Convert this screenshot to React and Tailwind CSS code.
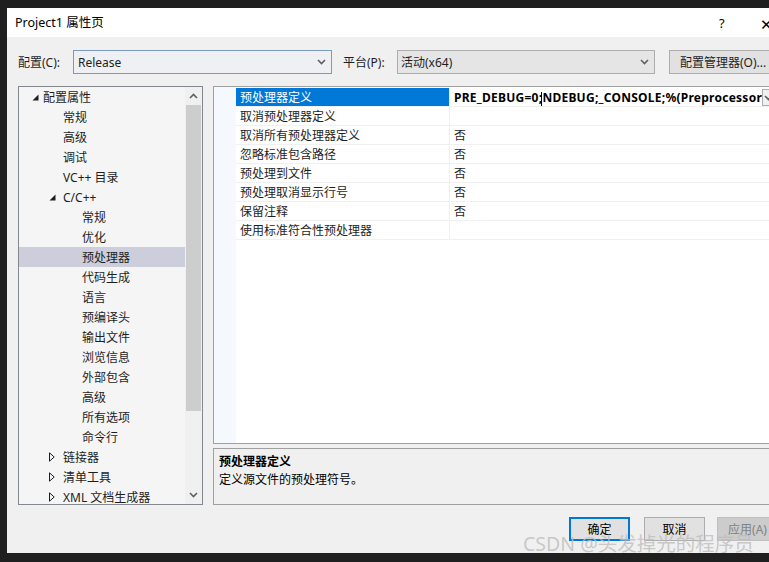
import React from "react";

const F = "font-['Noto_Sans','Noto_Sans_CJK_SC',sans-serif]";

function Chevron({ up }) {
  return (
    <svg width="9" height="6" viewBox="0 0 9 6">
      <path d={up ? "M1 5 L4.5 1.5 L8 5" : "M1 1 L4.5 4.5 L8 1"} fill="none" stroke="#606060" strokeWidth="1.6" />
    </svg>
  );
}

function Tri({ open }) {
  if (open)
    return (
      <svg width="7" height="7" viewBox="0 0 7 7">
        <path d="M6.5 0.5 L6.5 6.5 L0.5 6.5 Z" fill="#1e1e1e" />
      </svg>
    );
  return (
    <svg width="6" height="10" viewBox="0 0 6 10">
      <path d="M0.5 0.8 L5.2 5 L0.5 9.2 Z" fill="none" stroke="#1e1e1e" strokeWidth="1" />
    </svg>
  );
}

const tree = [
  { t: "配置属性", l: 0, tri: "open" },
  { t: "常规", l: 1 },
  { t: "高级", l: 1 },
  { t: "调试", l: 1 },
  { t: "VC++ 目录", l: 1 },
  { t: "C/C++", l: 1, tri: "open" },
  { t: "常规", l: 2 },
  { t: "优化", l: 2 },
  { t: "预处理器", l: 2, sel: true },
  { t: "代码生成", l: 2 },
  { t: "语言", l: 2 },
  { t: "预编译头", l: 2 },
  { t: "输出文件", l: 2 },
  { t: "浏览信息", l: 2 },
  { t: "外部包含", l: 2 },
  { t: "高级", l: 2 },
  { t: "所有选项", l: 2 },
  { t: "命令行", l: 2 },
  { t: "链接器", l: 1, tri: "closed" },
  { t: "清单工具", l: 1, tri: "closed" },
  { t: "XML 文档生成器", l: 1, tri: "closed" },
];

const props = [
  ["预处理器定义", ""],
  ["取消预处理器定义", ""],
  ["取消所有预处理器定义", "否"],
  ["忽略标准包含路径", "否"],
  ["预处理到文件", "否"],
  ["预处理取消显示行号", "否"],
  ["保留注释", "否"],
  ["使用标准符合性预处理器", ""],
];

export default function App() {
  const textX = { 0: "pl-[24px]", 1: "pl-[44px]", 2: "pl-[63px]" };
  const triX = { 0: "left-[13px]", 1: "left-[30px]", 2: "left-[48px]" };
  return (
    <div className={`${F} w-[769px] h-[562px] bg-[#1f1f1f] pt-[8px] pl-[7px] pb-[9px] flex flex-col overflow-hidden text-[12px] text-[#1e1e1e]`}>
      <div className="flex-1 flex flex-col bg-[#f0f0f0] relative w-[800px]">
        {/* title bar */}
        <div className="h-[29px] bg-white flex items-center shrink-0 pt-[2px] relative">
          <span className="pl-[8px] text-[12.5px] text-black">Project1 属性页</span>
          <span className="absolute left-[712px] top-[6px] text-[13px] text-black">?</span>
          <span className="absolute left-[753px] top-[5px] text-[15px] text-black font-light">✕</span>
        </div>
        {/* control row */}
        <div className="flex items-center h-[24px] mt-[13px] pl-[11px] shrink-0">
          <span className="w-[55px] pt-[2px]">配置(C):</span>
          <div className="w-[259px] h-[24px] border border-[#7a9ac0] bg-[#eef0f3] flex items-center justify-between pl-[4px] pr-[5px]">
            <span className="pt-[2px]">Release</span>
            <Chevron />
          </div>
          <span className="ml-[11px] w-[54px] pt-[2px]">平台(P):</span>
          <div className="w-[258px] h-[24px] border border-[#adadad] bg-[#e5e5e5] flex items-center justify-between pl-[3px] pr-[5px]">
            <span className="pt-[2px]">活动(x64)</span>
            <Chevron />
          </div>
          <div className="ml-[14px] w-[110px] h-[24px] border border-[#adadad] bg-[#e1e1e1] flex items-center pl-[10px] pt-[2px]">
            配置管理器(O)...
          </div>
        </div>
        {/* main area */}
        <div className="flex mt-[12px] pl-[11px] h-[419px] shrink-0">
          {/* tree */}
          <div className="w-[185px] h-full border border-[#828790] bg-[#f5f5f5] flex">
            <div className="w-[166px] flex flex-col">
              {tree.map((r, i) => (
                <div
                  key={i}
                  className={`relative h-[20px] flex items-center pt-[2px] ${textX[r.l]} ${r.sel ? "bg-[#cccedb]" : ""}`}
                >
                  {r.tri && (
                    <span className={`absolute ${triX[r.l]} top-0 h-[20px] flex items-center`}>
                      <Tri open={r.tri === "open"} />
                    </span>
                  )}
                  <span className="whitespace-nowrap">{r.t}</span>
                </div>
              ))}
            </div>
            <div className="w-[17px] bg-[#f0f0f0] flex flex-col items-center">
              <div className="h-[18px] flex items-center justify-center">
                <Chevron up />
              </div>
              <div className="w-[15px] h-[306px] bg-[#cdcdcd]" />
              <div className="flex-1" />
              <div className="h-[18px] flex items-center justify-center">
                <Chevron />
              </div>
            </div>
          </div>
          {/* right */}
          <div className="ml-[10px] flex-1 flex flex-col">
            <div className="h-[358px] border border-[#a0a0a0] bg-white flex">
              <div className="w-[22px] bg-[#f5f9fe]" />
              <div className="flex-1 flex flex-col pt-[1px]">
                {props.map(([n, v], i) => (
                  <div key={i} className="h-[19px] flex border-b border-[#f0f0f0]">
                    <div
                      className={`w-[214px] flex items-center pl-[4px] pt-[2px] border-r border-[#f0f0f0] ${i === 0 ? "bg-[#0078d7] text-white" : ""}`}
                    >
                      {n}
                    </div>
                    <div className="flex-1 flex items-center pl-[4px] pt-[2px]">
                      {i === 0 ? (
                        <span className="font-bold text-black whitespace-nowrap tracking-[0.25px]">
                          PRE_DEBUG=0;<span className="inline-block w-[1px] h-[14px] bg-black align-middle -ml-[1px]" />NDEBUG;_CONSOLE;%(Preprocessor
                        </span>
                      ) : (
                        v
                      )}
                    </div>
                  </div>
                ))}
              </div>
            </div>
            <div className="mt-[4px] flex-1 border border-[#a0a0a0] bg-[#f0f0f0] pl-[5px] pt-[4px]">
              <div className="font-bold h-[18px] leading-[18px] text-black">预处理器定义</div>
              <div className="h-[18px] leading-[18px] text-black">定义源文件的预处理符号。</div>
            </div>
          </div>
        </div>
        {/* value dropdown button overlay */}
        <div className="absolute left-[755px] top-[81px] w-[12px] h-[17px] border border-[#adadad] bg-[#f0f0f0] flex items-center pl-[1px]">
          <Chevron />
        </div>
        {/* buttons */}
        <div className="flex mt-[12px] pl-[562px] h-[24px] shrink-0">
          <div className="w-[61px] h-[24px] border-2 border-[#0078d7] bg-[#e1e1e1] flex items-center justify-center text-black pt-[2px]">
            确定
          </div>
          <div className="ml-[14px] w-[61px] h-[24px] border border-[#adadad] bg-[#e1e1e1] flex items-center justify-center text-black pt-[2px]">
            取消
          </div>
          <div className="ml-[12px] w-[61px] h-[24px] border border-[#bfbfbf] bg-[#cccccc] flex items-center justify-center text-[#838383] pt-[2px]">
            应用(A)
          </div>
        </div>
        {/* watermark */}
        <div className="absolute left-[516px] top-[526px] text-[19.5px] text-[#bdbdbd]/80 whitespace-nowrap leading-none">
          CSDN @头发掉光的程序员
        </div>
      </div>
    </div>
  );
}
